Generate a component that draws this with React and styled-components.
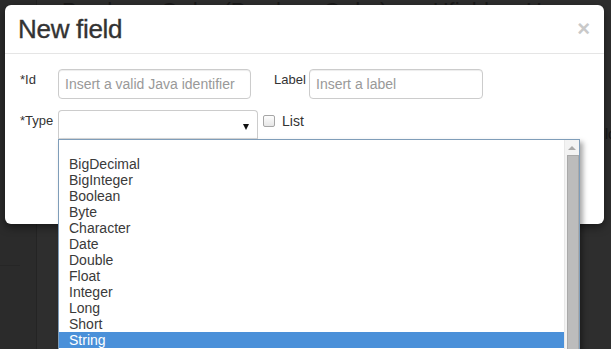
import React from 'react';
import styled, { createGlobalStyle } from 'styled-components';

const GlobalStyle = createGlobalStyle`
  html, body {
    margin: 0;
    padding: 0;
    background: #2e2e2e;
    overflow: hidden;
  }
  * {
    box-sizing: border-box;
  }
`;

const Page = styled.div`
  position: relative;
  width: 611px;
  height: 349px;
  overflow: hidden;
  background: #2e2e2e;
  font-family: 'Liberation Sans', Arial, sans-serif;
`;

/* the dimmed page behind the dialog */
const Behind = styled.div`
  display: flex;
  height: 100%;
`;

const SideColumn = styled.div`
  width: 37px;
  flex-shrink: 0;
  border-right: 1px solid #242424;
  background: #2b2b2b;
  display: flex;
  flex-direction: column;
  justify-content: flex-end;
`;

const SideCell = styled.div`
  height: 84px;
  border-top: 1px solid #262626;
  margin-right: 16px;
`;

const BehindMain = styled.div`
  flex: 1;
  display: flex;
  flex-direction: column;
`;

const BehindBar = styled.div`
  display: flex;
  align-items: baseline;
  gap: 26px;
  margin-top: 0;
  padding-left: 25px;
  font-size: 22px;
  line-height: 22px;
  color: #1a1a1a;
  white-space: nowrap;
`;

const BehindSide = styled.div`
  align-self: flex-end;
  margin-top: 104px;
  margin-right: -4px;
  font-size: 14px;
  color: #161616;
`;

const Modal = styled.div`
  position: absolute;
  left: 5px;
  top: 5px;
  width: 599px;
  height: 219px;
  background: #fff;
  border-radius: 6px;
  box-shadow: 0 3px 9px rgba(0, 0, 0, 0.5);
`;

const Header = styled.div`
  display: flex;
  align-items: flex-start;
  justify-content: space-between;
  height: 49px;
  padding: 9px 14px 0 13px;
  border-bottom: 1px solid #e5e5e5;
`;

const Title = styled.h4`
  margin: 0;
  font-size: 26px;
  line-height: 30px;
  font-weight: 500;
  color: #333;
  letter-spacing: -0.3px;
  -webkit-text-stroke: 0.35px #333;
`;

const Close = styled.button`
  border: 0;
  background: transparent;
  padding: 0;
  margin-top: 5px;
  font-family: 'Liberation Sans', Arial, sans-serif;
  font-size: 22px;
  line-height: 20px;
  font-weight: bold;
  color: #c9c9c9;
`;

const Body = styled.div`
  display: flex;
  flex-direction: column;
  gap: 11px;
  padding: 15px 15px;
`;

const Row = styled.div`
  display: flex;
  align-items: flex-start;
`;

const FieldLabel = styled.label`
  width: ${(p) => p.$width || 38}px;
  margin-left: ${(p) => p.$offset || 0}px;
  padding-top: 2px;
  font-size: 13px;
  line-height: 18px;
  color: #333;
`;

const TextInput = styled.input`
  width: ${(p) => p.$width}px;
  height: 30px;
  padding: 0 6px;
  border: 1px solid #ccc;
  border-radius: 4px;
  font-family: 'Liberation Sans', Arial, sans-serif;
  font-size: 14px;
  color: #555;
  box-shadow: inset 0 1px 1px rgba(0, 0, 0, 0.075);
  &::placeholder {
    color: #999;
  }
`;

const SelectWrap = styled.div`
  position: relative;
`;

const SelectBox = styled.div`
  display: flex;
  align-items: center;
  justify-content: flex-end;
  width: 200px;
  height: 29px;
  padding-right: 8px;
  border: 1px solid #ccc;
  border-bottom-color: #d8d8d8;
  border-radius: 4px 4px 0 0;
  background: #fff;
`;

const Caret = styled.span`
  width: 0;
  height: 0;
  margin-top: 4px;
  border-left: 3px solid transparent;
  border-right: 3px solid transparent;
  border-top: 6px solid #111;
`;

const CheckLabel = styled.label`
  display: flex;
  align-items: center;
  gap: 7px;
  margin-left: 5px;
  padding-top: 3px;
  font-size: 14px;
  line-height: 16px;
  color: #333;
`;

const Check = styled.span`
  width: 12px;
  height: 12px;
  border: 1px solid #a6a6a6;
  border-radius: 2px;
  background: linear-gradient(#fdfdfd, #e6e6e6);
`;

const ListBox = styled.div`
  position: absolute;
  left: 0;
  top: 100%;
  width: 522px;
  height: 212px;
  display: flex;
  border: 1px solid #7f9db9;
  background: #fff;
  box-shadow: 3px 3px 5px rgba(0, 0, 0, 0.35);
  z-index: 2;
`;

const Options = styled.ul`
  flex: 1;
  margin: 0;
  padding: 0;
  list-style: none;
`;

const Option = styled.li`
  height: 16px;
  padding-left: 10px;
  font-size: 14px;
  line-height: 16px;
  color: ${(p) => (p.$selected ? '#fff' : '#3a3a3a')};
  background: ${(p) => (p.$selected ? '#4a90d9' : 'transparent')};
`;

const ScrollTrack = styled.div`
  width: 15px;
  display: flex;
  flex-direction: column;
  align-items: center;
  background: #f3f3f3;
  border-left: 1px solid #e8e8e8;
`;

const ScrollArrow = styled.span`
  margin: 6px 0 5px;
  width: 0;
  height: 0;
  border-left: 4px solid transparent;
  border-right: 4px solid transparent;
  border-bottom: 4px solid #a9a9a9;
`;

const ScrollThumb = styled.div`
  flex: 1;
  width: 12px;
  margin-left: 1px;
  background: #bcbcbc;
  border: 1px solid #a9a9a9;
`;

const types = [
  '',
  'BigDecimal',
  'BigInteger',
  'Boolean',
  'Byte',
  'Character',
  'Date',
  'Double',
  'Float',
  'Integer',
  'Long',
  'Short',
  'String',
];

export default function App() {
  return (
    <Page>
      <GlobalStyle />
      <Behind>
        <SideColumn>
          <SideCell />
        </SideColumn>
        <BehindMain>
          <BehindBar>
            <span>Purchase Order (PurchaseOrder)</span>
            <span>● Hfields</span>
            <span>Hasa</span>
          </BehindBar>
          <BehindSide>lc</BehindSide>
        </BehindMain>
      </Behind>

      <Modal>
        <Header>
          <Title>New field</Title>
          <Close>×</Close>
        </Header>
        <Body>
          <Row>
            <FieldLabel>*Id</FieldLabel>
            <TextInput $width={193} placeholder="Insert a valid Java identifier" />
            <FieldLabel $width={35} $offset={23}>
              Label
            </FieldLabel>
            <TextInput $width={174} placeholder="Insert a label" />
          </Row>
          <Row>
            <FieldLabel>*Type</FieldLabel>
            <SelectWrap>
              <SelectBox>
                <Caret />
              </SelectBox>
              <ListBox>
                <Options>
                  {types.map((t, i) => (
                    <Option key={i} $selected={t === 'String'}>
                      {t}
                    </Option>
                  ))}
                </Options>
                <ScrollTrack>
                  <ScrollArrow />
                  <ScrollThumb />
                </ScrollTrack>
              </ListBox>
            </SelectWrap>
            <CheckLabel>
              <Check />
              List
            </CheckLabel>
          </Row>
        </Body>
      </Modal>
    </Page>
  );
}
